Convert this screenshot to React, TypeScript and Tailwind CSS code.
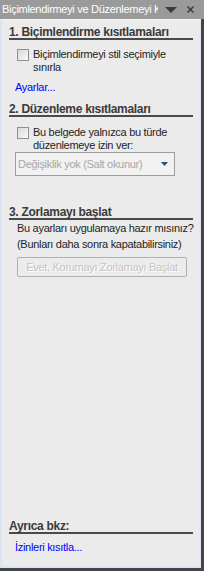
import React from "react";

const font = { fontFamily: "'Liberation Sans', Arial, sans-serif" };

function Checkbox() {
  return (
    <div className="mt-[1px] h-[12px] w-[12px] shrink-0 border border-[#8e8f8f] bg-gradient-to-br from-[#d8d8d8] to-[#fafafa]" />
  );
}

function Heading({ children }: { children: React.ReactNode }) {
  return (
    <div className="mx-[7px] whitespace-nowrap border-b-2 border-[#4a4a4a] text-[12px] font-bold leading-[12px] text-[#3a3a3a]">
      {children}
    </div>
  );
}

export default function App() {
  return (
    <div
      className="flex h-[571px] w-[204px] flex-col overflow-hidden bg-[#444444] text-[11px] tracking-[-0.3px] text-[#1e1e1e]"
      style={font}
    >
      <div className="flex h-[19px] shrink-0 items-center bg-[#9a9a9a] pl-[2px] text-white">
        <div className="w-[156px] shrink-0 overflow-hidden whitespace-nowrap text-[11px] leading-[19px]">
          Biçimlendirmeyi ve Düzenlemeyi K
        </div>
        <svg width="12" height="6" viewBox="0 0 12 6" className="ml-[7px] shrink-0">
          <path d="M0 0 H12 L6 6 Z" fill="#3a3a3a" />
        </svg>
        <svg width="7" height="7" viewBox="0 0 7 7" className="ml-[10px] shrink-0">
          <path d="M0.5 0.5 L6.5 6.5 M6.5 0.5 L0.5 6.5" stroke="#3a3a3a" strokeWidth="1.5" />
        </svg>
      </div>
      <div className="mr-[3px] flex flex-1 flex-col border-b-2 border-l-2 border-r border-t border-b-[#d9e5f0] border-l-[#d9e5f0] border-r-[#d9e5f0] border-t-[#f6f6f6] bg-[#ebebeb] pt-[6px]">
        <Heading>1. Biçimlendirme kısıtlamaları</Heading>
        <div className="mt-[8px] flex gap-[4px] pl-[15px] leading-[13px]">
          <Checkbox />
          <div>
            Biçimlendirmeyi stil seçimiyle
            <br />
            sınırla
          </div>
        </div>
        <div className="mt-[7px] pl-[13px] leading-[13px] text-[#0000ff]">Ayarlar...</div>
        <div className="mt-[9px]">
          <Heading>2. Düzenleme kısıtlamaları</Heading>
        </div>
        <div className="mt-[9px] flex gap-[4px] pl-[15px] leading-[13px]">
          <Checkbox />
          <div>
            Bu belgede yalnızca bu türde
            <br />
            düzenlemeye izin ver:
          </div>
        </div>
        <div className="ml-[13px] mt-[0px] flex h-[24px] w-[160px] items-center justify-between border border-[#9c9c9c] bg-[#f1f1f1] pl-[2px] pr-[6px] text-[#a8a8a8]">
          <span className="whitespace-nowrap">Değişiklik yok (Salt okunur)</span>
          <svg width="7" height="4" viewBox="0 0 7 4" className="shrink-0">
            <path d="M0 0 H7 L3.5 4 Z" fill="#1f4f8a" />
          </svg>
        </div>
        <div className="mt-[30px]">
          <Heading>3. Zorlamayı başlat</Heading>
        </div>
        <div className="whitespace-nowrap pl-[15px] leading-[16px]">
          Bu ayarları uygulamaya hazır mısınız?
          <br />
          (Bunları daha sonra kapatabilirsiniz)
        </div>
        <div className="ml-[15px] mt-[5px] flex h-[20px] w-[170px] items-center justify-center whitespace-nowrap rounded-[2px] border border-[#b0b0b0] bg-[#ececec] text-[#c4c4c4] [text-shadow:1px_1px_0_#ffffff]">
          Evet, Korumayı Zorlamayı Başlat
        </div>
        <div className="flex-1" />
        <Heading>Ayrıca bkz:</Heading>
        <div className="mb-[12px] mt-[7px] pl-[13px] leading-[13px] text-[#0000ff]">İzinleri kısıtla...</div>
      </div>
      <div className="h-[3px] shrink-0" />
    </div>
  );
}
